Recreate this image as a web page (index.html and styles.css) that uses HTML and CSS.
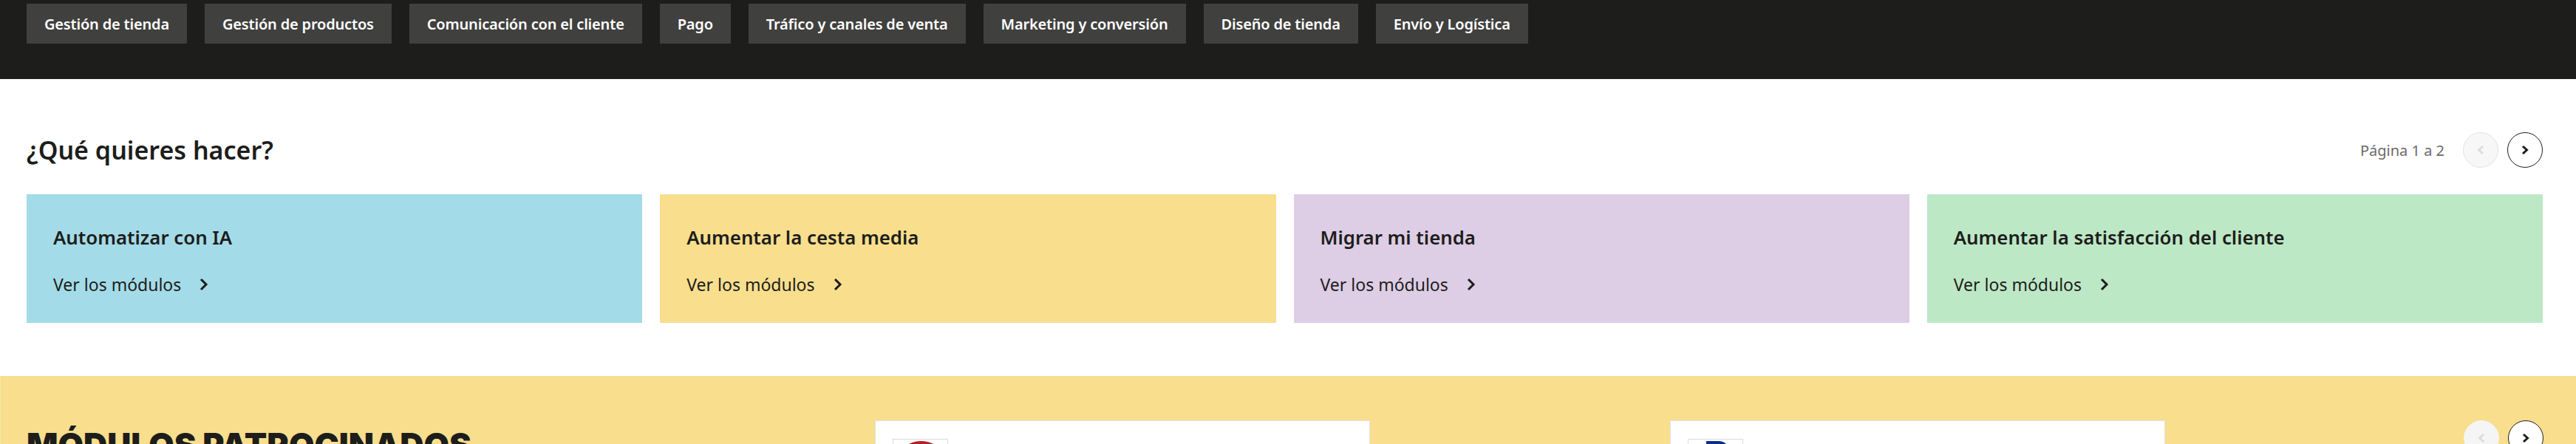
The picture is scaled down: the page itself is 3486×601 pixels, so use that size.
FILE: index.html
```html
<!DOCTYPE html>
<html lang="es">
  <head>
    <meta charset="UTF-8" />
    <meta name="viewport" content="width=device-width, initial-scale=1.0" />
    <title>Módulos</title>
    <link rel="stylesheet" href="styles.css">
  </head>
  <body>
    <div class="top-nav">
      <a class="nav-item" href="#">Gestión de tienda</a>
      <a class="nav-item" href="#">Gestión de productos</a>
      <a class="nav-item" href="#">Comunicación con el cliente</a>
      <a class="nav-item" href="#">Pago</a>
      <a class="nav-item" href="#">Tráfico y canales de venta</a>
      <a class="nav-item" href="#">Marketing y conversión</a>
      <a class="nav-item" href="#">Diseño de tienda</a>
      <a class="nav-item" href="#">Envío y Logística</a>
    </div>

    <div class="goals">
      <div class="goals-header">
        <h2 class="goals-title">¿Qué quieres hacer?</h2>
        <div class="pager">
          <span class="pager-text">Página 1 a 2</span>
          <button class="round-btn round-btn-off" type="button">
            <svg width="14" height="16" viewBox="0 0 14 16"><path d="M10 3 4.500 8l5.500 5" /></svg>
          </button>
          <button class="round-btn" type="button">
            <svg width="14" height="16" viewBox="0 0 14 16"><path d="M4 3l5.500 5L4 13" /></svg>
          </button>
        </div>
      </div>

      <div class="goal-cards">
        <a class="goal-card goal-blue" href="#">
          <span class="goal-name">Automatizar con IA</span>
          <span class="goal-link">Ver los módulos
            <svg width="14" height="18" viewBox="0 0 14 18"><path d="M3 2l7 7-7 7" /></svg>
          </span>
        </a>
        <a class="goal-card goal-yellow" href="#">
          <span class="goal-name">Aumentar la cesta media</span>
          <span class="goal-link">Ver los módulos
            <svg width="14" height="18" viewBox="0 0 14 18"><path d="M3 2l7 7-7 7" /></svg>
          </span>
        </a>
        <a class="goal-card goal-purple" href="#">
          <span class="goal-name">Migrar mi tienda</span>
          <span class="goal-link">Ver los módulos
            <svg width="14" height="18" viewBox="0 0 14 18"><path d="M3 2l7 7-7 7" /></svg>
          </span>
        </a>
        <a class="goal-card goal-green" href="#">
          <span class="goal-name">Aumentar la satisfacción del cliente</span>
          <span class="goal-link">Ver los módulos
            <svg width="14" height="18" viewBox="0 0 14 18"><path d="M3 2l7 7-7 7" /></svg>
          </span>
        </a>
      </div>
    </div>

    <div class="sponsored">
      <h2 class="sponsored-title">MÓDULOS PATROCINADOS</h2>
      <div class="sponsor-card">
        <div class="sponsor-logo">
          <svg width="73" height="73" viewBox="0 0 73 73"><circle cx="37.500" cy="37" r="33" fill="none" stroke="#b3212b" stroke-width="4" /></svg>
        </div>
      </div>
      <div class="sponsor-card">
        <div class="sponsor-logo">
          <svg width="73" height="73" viewBox="0 0 73 73"><path d="M24 2h16c9 0 14 5 14 13s-6 15-15 15H24z" fill="#0a2f85" /></svg>
        </div>
      </div>
      <div class="pager">
        <button class="round-btn round-btn-off round-btn-flat" type="button">
          <svg width="14" height="16" viewBox="0 0 14 16"><path d="M10 3 4.500 8l5.500 5" /></svg>
        </button>
        <button class="round-btn round-btn-white" type="button">
          <svg width="14" height="16" viewBox="0 0 14 16"><path d="M4 3l5.500 5L4 13" /></svg>
        </button>
      </div>
    </div>
  </body>
</html>
```

FILE: styles.css
```css
* {
  margin: 0;
  padding: 0;
  box-sizing: border-box;
}

html,
body {
  height: 601px;
  overflow: hidden;
}

body {
  font-family: "Noto Sans", "Open Sans", sans-serif;
  background: #fff;
  color: #1d1d1b;
}

a {
  color: inherit;
  text-decoration: none;
}

.top-nav {
  display: flex;
  gap: 24px;
  height: 107px;
  padding: 5px 36px 0;
  background: #1d1d1b;
}

.nav-item {
  display: flex;
  align-items: center;
  height: 54px;
  padding: 0 24px;
  background: #40403e;
  color: #fff;
  font-size: 20px;
  font-weight: 600;
  letter-spacing: -0.18px;
}

.goals {
  padding: 72px 45px 72px 36px;
}

.goals-header {
  display: flex;
  align-items: center;
  justify-content: space-between;
  height: 48px;
  margin-bottom: 36px;
}

.goals-title {
  font-size: 34px;
  font-weight: 600;
}

.pager {
  display: flex;
  align-items: center;
  gap: 12px;
}

.pager-text {
  margin-right: 13px;
  color: #6b6b69;
  font-size: 20px;
}

.round-btn {
  display: flex;
  align-items: center;
  justify-content: center;
  width: 48px;
  height: 48px;
  border: 1px solid #1d1d1b;
  border-radius: 50%;
  background: transparent;
}

.round-btn svg {
  fill: none;
  stroke: #1d1d1b;
  stroke-width: 3;
}

.round-btn-off {
  border-color: #e3e3e3;
  background: #f7f7f7;
}

.round-btn-off svg {
  stroke: #dcdcdc;
}

.round-btn-flat {
  border-color: #f5f5f5;
  background: #f5f5f5;
}

.round-btn-white {
  background: #fff;
}

.goal-cards {
  display: grid;
  grid-template-columns: repeat(4, 1fr);
  gap: 24px;
}

.goal-card {
  display: flex;
  flex-direction: column;
  height: 174px;
  padding: 40px 36px 0;
}

.goal-blue {
  background: #a4dbe8;
}

.goal-yellow {
  background: #f8de8d;
}

.goal-purple {
  background: #ddcde5;
}

.goal-green {
  background: #bde8c6;
}

.goal-name {
  font-size: 25.8px;
  font-weight: 600;
  line-height: 36px;
}

.goal-link {
  display: flex;
  align-items: center;
  gap: 24px;
  margin-top: 28px;
  font-size: 23px;
  line-height: 36px;
}

.goal-link svg {
  fill: none;
  stroke: #1d1d1b;
  stroke-width: 3;
}

.sponsored {
  display: flex;
  align-items: flex-start;
  height: 92px;
  padding: 60px 44px 0 35px;
  overflow: hidden;
  background: #f8de8d;
  border-left: 1px solid #f9e6a8;
}

.sponsored-title {
  width: 1148px;
  flex-shrink: 0;
  padding-top: 5px;
  font-family: "Inter", sans-serif;
  font-size: 44.5px;
  font-weight: 900;
  line-height: 56px;
}

.sponsor-card {
  flex-shrink: 0;
  width: 670px;
  height: 200px;
  margin-right: 406px;
  padding: 24px 23px;
  background: #fff;
  border: 1px solid #e3e3e3;
}

.sponsor-card + .sponsor-card {
  margin-right: 404px;
}

.sponsor-logo {
  width: 75px;
  height: 75px;
  border: 1px solid #dcdcdc;
}

.sponsored .pager {
  flex-shrink: 0;
}
```
